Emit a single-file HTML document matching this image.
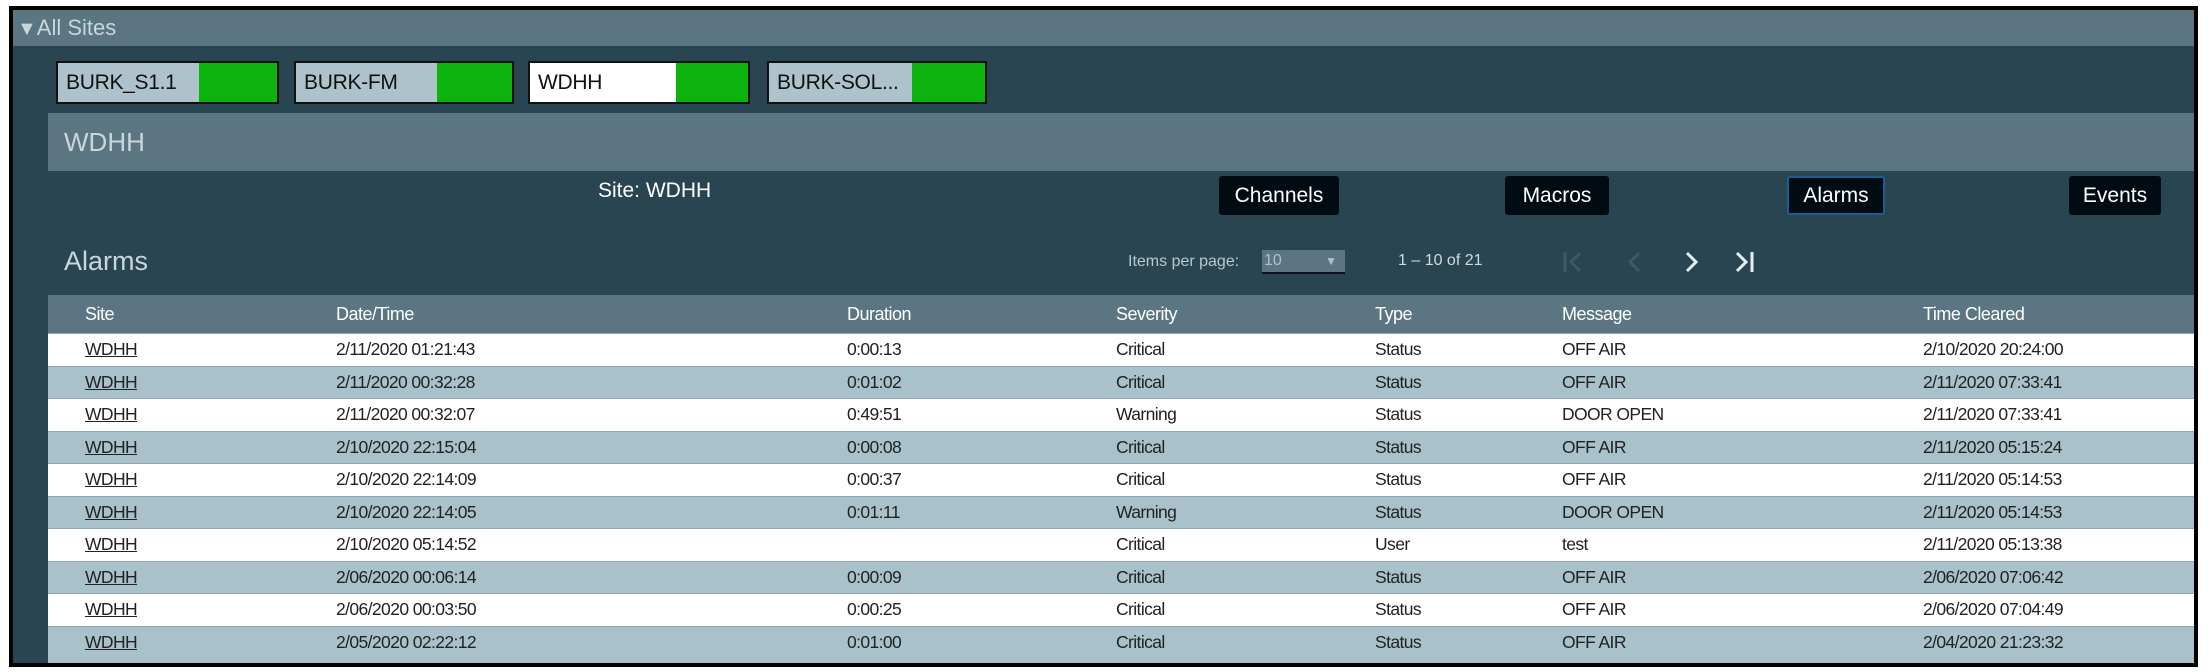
<!DOCTYPE html>
<html><head><meta charset="utf-8"><style>
*{margin:0;padding:0;box-sizing:border-box}
body{width:2209px;height:672px;background:#fff;position:relative;overflow:hidden;font-family:"Liberation Sans",Arial,sans-serif}
.frame{position:absolute;left:9px;top:6px;width:2189px;height:661px;border:4px solid #000;background:#2a4552;overflow:hidden}
.abs{position:absolute}
.allsites{left:0;top:0;width:100%;height:36px;background:#5b7582;color:#c9d6dc;font-size:22px;line-height:36px;padding-left:4px}
.tab{top:51px;height:43px;border:2px solid #111;background:#aec2cb;font-size:21px;line-height:39px;padding-left:8px;color:#111;letter-spacing:-0.3px}
.tab .g{position:absolute;right:0;top:0;bottom:0;background:#0db30d}
.wbar{left:35px;top:103px;width:2150px;height:58px;background:#5b7582;color:#c9d6dc;font-size:26px;line-height:58px;padding-left:16px}
.btn{top:166px;height:39px;background:#000c12;color:#fff;font-size:21px;line-height:39px;text-align:center;border-radius:3px}
.hdr{left:35px;top:285px;width:2150px;height:38px;background:#5b7582}
.hdr span{position:absolute;top:0;line-height:38px;color:#fff;font-size:18px;letter-spacing:-0.5px}
.row{position:absolute;left:48px;width:2150px;height:32.5px;border-top:1px solid #8ea4ae}
.row span{position:absolute;top:0;line-height:31px;font-size:17.5px;letter-spacing:-0.6px;color:#222}
.row span.u{text-decoration:underline}
</style></head><body>
<div class="frame">
 <div class="abs allsites"><span style="font-size:20px">&#9660;</span>All Sites</div>
 <div class="abs tab" style="left:43px;width:223px">BURK_S1.1<div class="g" style="width:78px"></div></div>
 <div class="abs tab" style="left:281px;width:220px">BURK-FM<div class="g" style="width:75px"></div></div>
 <div class="abs tab" style="left:515px;width:222px;background:#fff">WDHH<div class="g" style="width:72px"></div></div>
 <div class="abs tab" style="left:754px;width:220px">BURK-SOL...<div class="g" style="width:73px"></div></div>
 <div class="abs wbar">WDHH</div>
 <div class="abs" style="left:585px;top:169px;color:#fff;font-size:21px">Site: WDHH</div>
 <div class="abs btn" style="left:1206px;width:120px">Channels</div>
 <div class="abs btn" style="left:1492px;width:104px">Macros</div>
 <div class="abs btn" style="left:1774px;width:98px;border:2px solid #1c5f93;line-height:35px">Alarms</div>
 <div class="abs btn" style="left:2056px;width:92px">Events</div>
 <div class="abs" style="left:51px;top:236px;color:#c9d6dc;font-size:27px">Alarms</div>
 <div class="abs" style="left:1115px;top:243px;color:#b9c8cf;font-size:16px">Items per page:</div>
 <div class="abs" style="left:1249px;top:240px;width:83px;height:24px;background:#5b7582;border-bottom:2px solid #112;color:#aec2cb;font-size:16px;line-height:22px;padding-left:2px">10<span style="position:absolute;right:8px;font-size:12px">&#9660;</span></div>
 <div class="abs" style="left:1385px;top:242px;color:#d0dbe0;font-size:16px">1 – 10 of 21</div>
 <svg class="abs" style="left:1540px;top:236px" width="220" height="32" viewBox="0 0 220 32">
  <g fill="none" stroke-width="3">
   <path d="M12 6v20M27 7l-9 9 9 9" stroke="#3e5866"/>
   <path d="M86 7l-9 9 9 9" stroke="#3e5866"/>
   <path d="M134 7l9 9-9 9" stroke="#e8eef0"/>
   <path d="M184 7l9 9-9 9M199 6v20" stroke="#e8eef0"/>
  </g>
 </svg>
 <div class="abs hdr">
  <span style="left:37px">Site</span><span style="left:288px">Date/Time</span><span style="left:799px">Duration</span><span style="left:1068px">Severity</span><span style="left:1327px">Type</span><span style="left:1514px">Message</span><span style="left:1875px">Time Cleared</span>
 </div>
</div>
<div style="position:absolute;left:0;top:0;width:0;height:0">
<div class="row" style="top:333px;background:#fff"><span class="u" style="left:37px">WDHH</span><span style="left:288px">2/11/2020 01:21:43</span><span style="left:799px">0:00:13</span><span style="left:1068px">Critical</span><span style="left:1327px">Status</span><span style="left:1514px">OFF AIR</span><span style="left:1875px">2/10/2020 20:24:00</span></div>
<div class="row" style="top:365.5px;background:#a9c1cb"><span class="u" style="left:37px">WDHH</span><span style="left:288px">2/11/2020 00:32:28</span><span style="left:799px">0:01:02</span><span style="left:1068px">Critical</span><span style="left:1327px">Status</span><span style="left:1514px">OFF AIR</span><span style="left:1875px">2/11/2020 07:33:41</span></div>
<div class="row" style="top:398px;background:#fff"><span class="u" style="left:37px">WDHH</span><span style="left:288px">2/11/2020 00:32:07</span><span style="left:799px">0:49:51</span><span style="left:1068px">Warning</span><span style="left:1327px">Status</span><span style="left:1514px">DOOR OPEN</span><span style="left:1875px">2/11/2020 07:33:41</span></div>
<div class="row" style="top:430.5px;background:#a9c1cb"><span class="u" style="left:37px">WDHH</span><span style="left:288px">2/10/2020 22:15:04</span><span style="left:799px">0:00:08</span><span style="left:1068px">Critical</span><span style="left:1327px">Status</span><span style="left:1514px">OFF AIR</span><span style="left:1875px">2/11/2020 05:15:24</span></div>
<div class="row" style="top:463px;background:#fff"><span class="u" style="left:37px">WDHH</span><span style="left:288px">2/10/2020 22:14:09</span><span style="left:799px">0:00:37</span><span style="left:1068px">Critical</span><span style="left:1327px">Status</span><span style="left:1514px">OFF AIR</span><span style="left:1875px">2/11/2020 05:14:53</span></div>
<div class="row" style="top:495.5px;background:#a9c1cb"><span class="u" style="left:37px">WDHH</span><span style="left:288px">2/10/2020 22:14:05</span><span style="left:799px">0:01:11</span><span style="left:1068px">Warning</span><span style="left:1327px">Status</span><span style="left:1514px">DOOR OPEN</span><span style="left:1875px">2/11/2020 05:14:53</span></div>
<div class="row" style="top:528px;background:#fff"><span class="u" style="left:37px">WDHH</span><span style="left:288px">2/10/2020 05:14:52</span><span style="left:1068px">Critical</span><span style="left:1327px">User</span><span style="left:1514px">test</span><span style="left:1875px">2/11/2020 05:13:38</span></div>
<div class="row" style="top:560.5px;background:#a9c1cb"><span class="u" style="left:37px">WDHH</span><span style="left:288px">2/06/2020 00:06:14</span><span style="left:799px">0:00:09</span><span style="left:1068px">Critical</span><span style="left:1327px">Status</span><span style="left:1514px">OFF AIR</span><span style="left:1875px">2/06/2020 07:06:42</span></div>
<div class="row" style="top:593px;background:#fff"><span class="u" style="left:37px">WDHH</span><span style="left:288px">2/06/2020 00:03:50</span><span style="left:799px">0:00:25</span><span style="left:1068px">Critical</span><span style="left:1327px">Status</span><span style="left:1514px">OFF AIR</span><span style="left:1875px">2/06/2020 07:04:49</span></div>
<div class="row" style="top:625.5px;background:#a9c1cb;height:37.5px"><span class="u" style="left:37px">WDHH</span><span style="left:288px">2/05/2020 02:22:12</span><span style="left:799px">0:01:00</span><span style="left:1068px">Critical</span><span style="left:1327px">Status</span><span style="left:1514px">OFF AIR</span><span style="left:1875px">2/04/2020 21:23:32</span></div>
</div>
<div style="position:absolute;left:9px;top:663px;width:2189px;height:4px;background:#000"></div>
<div style="position:absolute;left:2194px;top:6px;width:4px;height:661px;background:#000"></div>
</body></html>
